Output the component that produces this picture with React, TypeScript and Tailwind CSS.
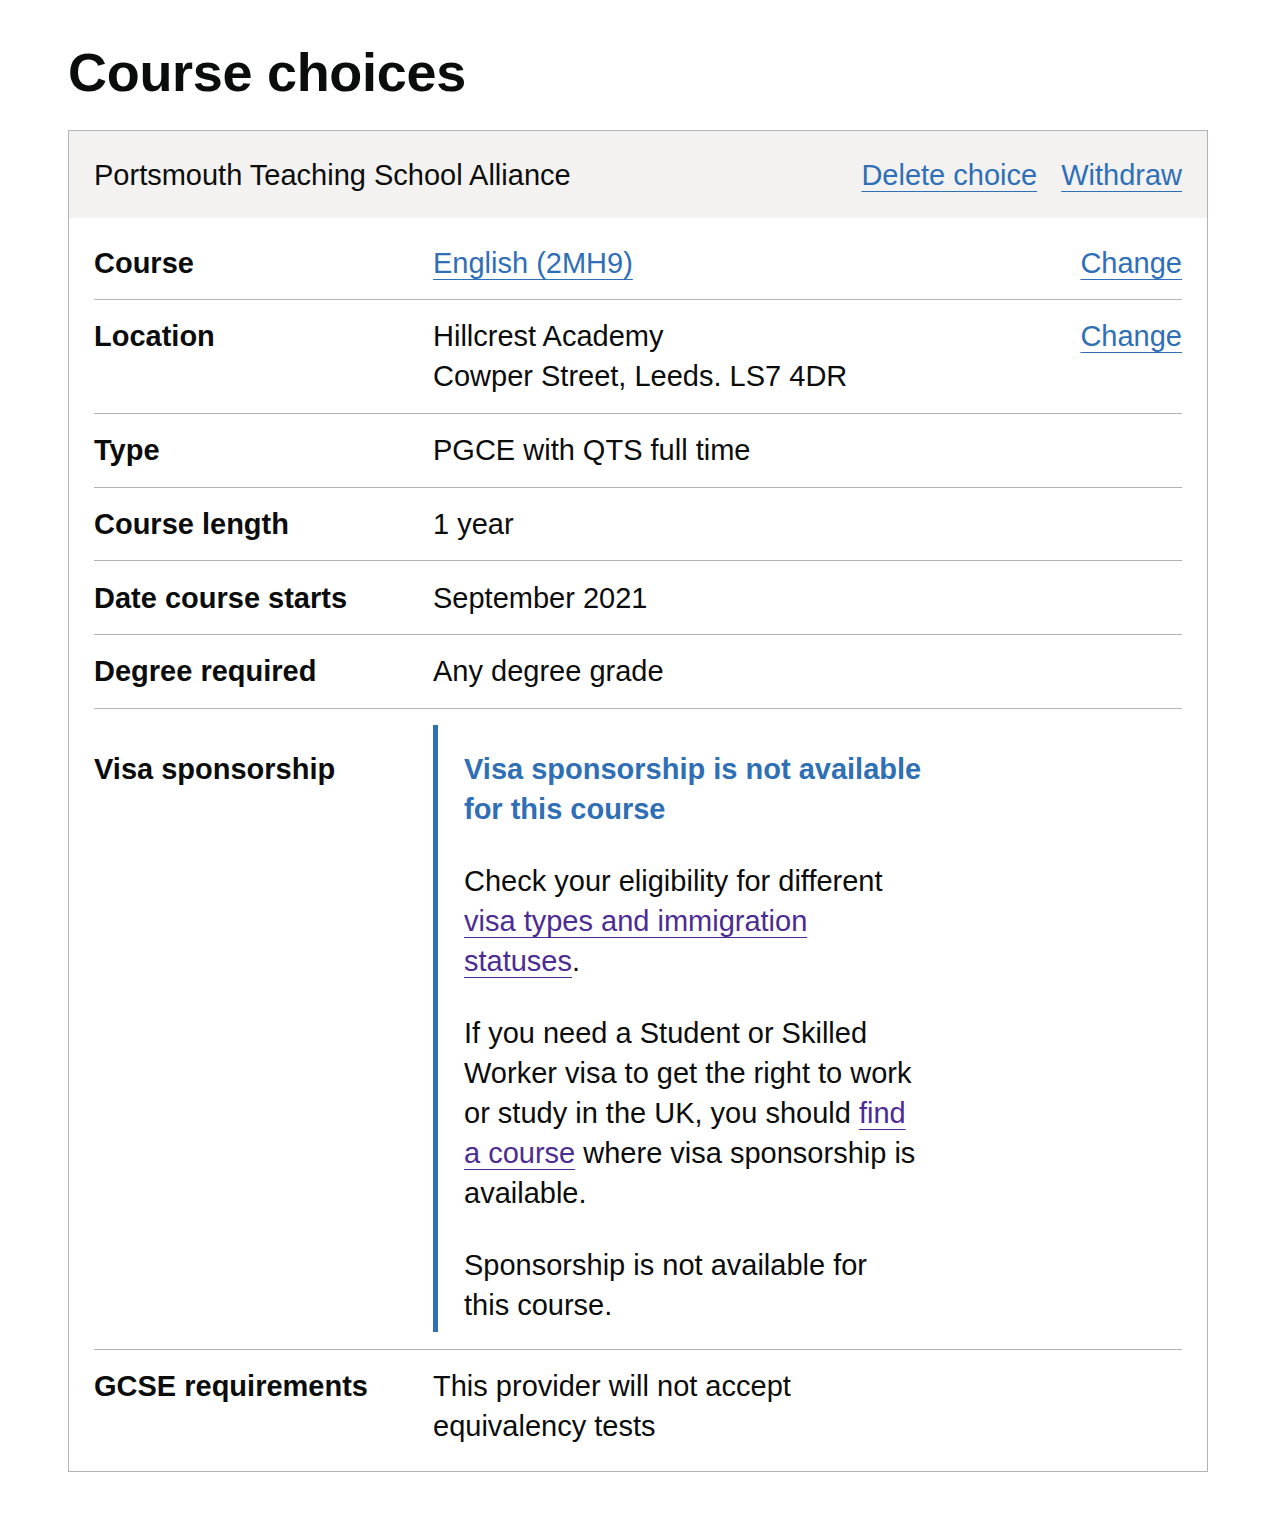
const font = { fontFamily: '"Liberation Sans", Arial, sans-serif' }

type Row = {
  label: string
  value: React.ReactNode
  action?: string
}

function Link({ children, visited }: { children: React.ReactNode; visited?: boolean }) {
  return (
    <a
      href="#"
      className={
        visited
          ? 'text-[#4c2c92] underline decoration-1 underline-offset-[6px]'
          : 'text-[#2f6fb6] underline decoration-1 underline-offset-[6px]'
      }
    >
      {children}
    </a>
  )
}

const rows: Row[] = [
  { label: 'Course', value: <Link>English (2MH9)</Link>, action: 'Change' },
  {
    label: 'Location',
    value: (
      <>
        Hillcrest Academy
        <br />
        Cowper Street, Leeds. LS7 4DR
      </>
    ),
    action: 'Change',
  },
  { label: 'Type', value: 'PGCE with QTS full time' },
  { label: 'Course length', value: '1 year' },
  { label: 'Date course starts', value: 'September 2021' },
  { label: 'Degree required', value: 'Any degree grade' },
]

function SummaryRow({ label, value, action }: Row) {
  return (
    <div className="grid grid-cols-[339px_515px_1fr] border-b border-[#b1b4b6] py-[16.4px]">
      <dt className="font-bold">{label}</dt>
      <dd>{value}</dd>
      <dd className="text-right">{action ? <Link>{action}</Link> : null}</dd>
    </div>
  )
}

export default function App() {
  return (
    <div className="min-h-screen bg-white px-[68px] pt-[40px] pb-[43px] text-[#0b0c0c]" style={font}>
      <h1 className="mb-[26px] text-[54px] leading-[64px] font-bold tracking-[-0.3px]">Course choices</h1>

      <section className="border border-[#b1b4b6] text-[29px] leading-[40px]">
        <header className="flex items-center justify-between bg-[#f3f2f1] px-[25px] pt-[24px] pb-[23px]">
          <h2 className="font-normal">Portsmouth Teaching School Alliance</h2>
          <div className="flex gap-[24px]">
            <Link>Delete choice</Link>
            <Link>Withdraw</Link>
          </div>
        </header>

        <dl className="px-[25px] py-[8.2px]">
          {rows.map((row) => (
            <SummaryRow key={row.label} {...row} />
          ))}

          <div className="grid grid-cols-[339px_515px_1fr] border-b border-[#b1b4b6] py-[16.4px]">
            <dt className="pt-[24px] font-bold">Visa sponsorship</dt>
            <dd>
              <div className="border-l-[5px] border-[#2f6fb6] pt-[24px] pb-[7px] pl-[26px] whitespace-nowrap">
                <h3 className="mb-[32px] font-bold text-[#2f6fb6]">
                  Visa sponsorship is not available
                  <br />
                  for this course
                </h3>
                <p className="mb-[32px]">
                  Check your eligibility for different
                  <br />
                  <Link visited>
                    visa types and immigration
                    <br />
                    statuses
                  </Link>
                  .
                </p>
                <p className="mb-[32px]">
                  If you need a Student or Skilled
                  <br />
                  Worker visa to get the right to work
                  <br />
                  or study in the UK, you should <Link visited>find</Link>
                  <br />
                  <Link visited>a course</Link> where visa sponsorship is
                  <br />
                  available.
                </p>
                <p>
                  Sponsorship is not available for
                  <br />
                  this course.
                </p>
              </div>
            </dd>
            <dd />
          </div>

          <div className="grid grid-cols-[339px_515px_1fr] py-[16.4px]">
            <dt className="font-bold">GCSE requirements</dt>
            <dd>This provider will not accept equivalency tests</dd>
            <dd />
          </div>
        </dl>
      </section>
    </div>
  )
}
